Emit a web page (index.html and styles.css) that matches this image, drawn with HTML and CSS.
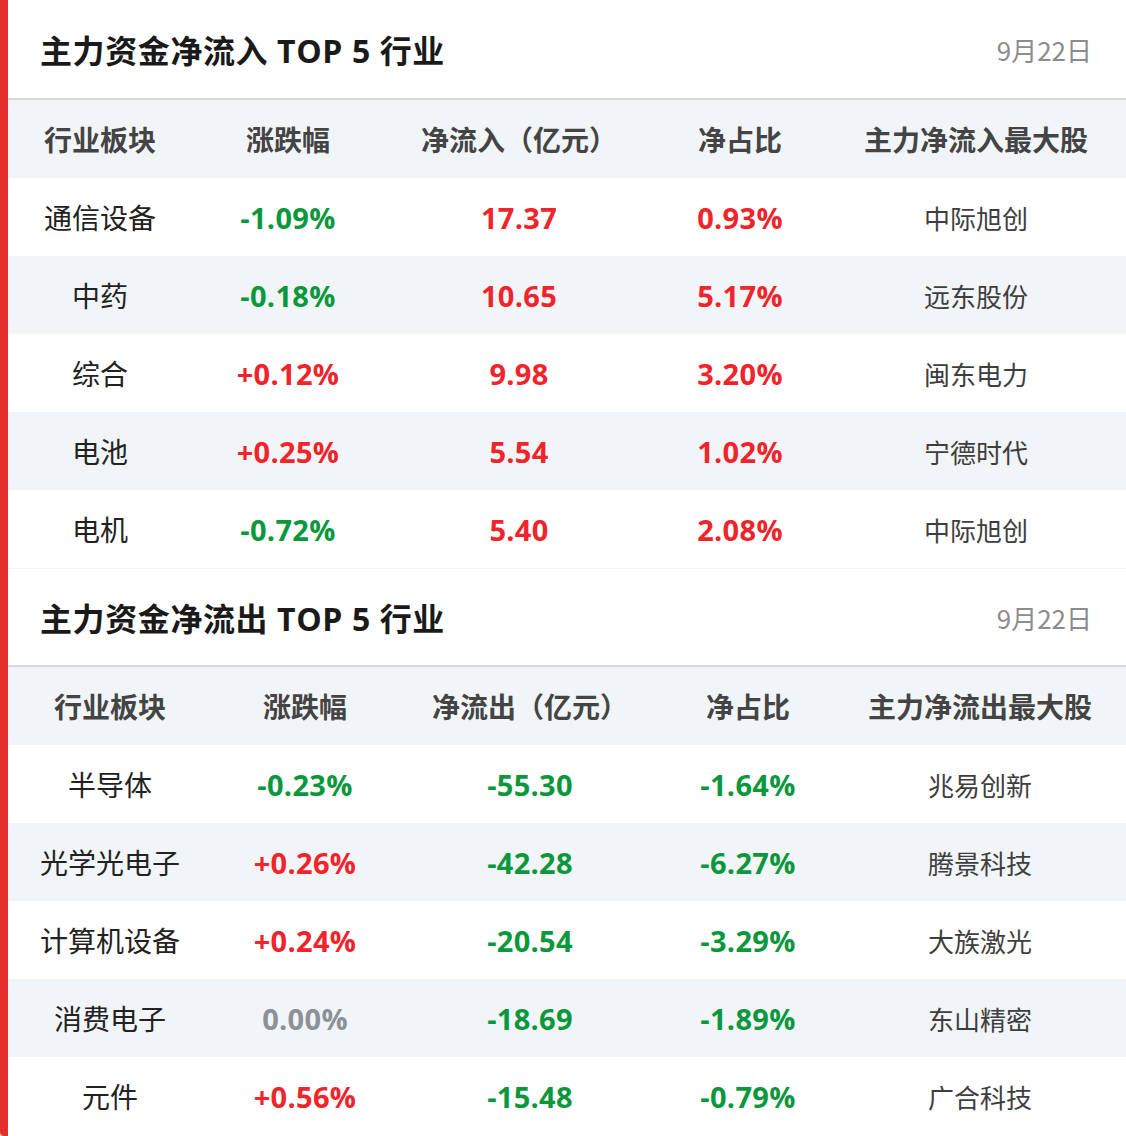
FILE: index.html
```html
<!DOCTYPE html>
<html lang="zh-CN">
<head>
<meta charset="utf-8">
<title>主力资金净流入/净流出 TOP 5 行业</title>
<link rel="stylesheet" href="styles.css">
</head>
<body>
<div class="page">
  <section class="panel">
    <header class="panel-head">
      <h2 class="panel-title">主力资金净流入 TOP 5 行业</h2>
      <span class="panel-date">9月22日</span>
    </header>
    <div class="grid grid-in">
      <div class="row row-head">
        <div class="cell">行业板块</div><div class="cell">涨跌幅</div><div class="cell">净流入（亿元）</div><div class="cell">净占比</div><div class="cell">主力净流入最大股</div>
      </div>
      <div class="row">
        <div class="cell name">通信设备</div><div class="cell num down">-1.09%</div><div class="cell num up">17.37</div><div class="cell num up">0.93%</div><div class="cell stock">中际旭创</div>
      </div>
      <div class="row alt">
        <div class="cell name">中药</div><div class="cell num down">-0.18%</div><div class="cell num up">10.65</div><div class="cell num up">5.17%</div><div class="cell stock">远东股份</div>
      </div>
      <div class="row">
        <div class="cell name">综合</div><div class="cell num up">+0.12%</div><div class="cell num up">9.98</div><div class="cell num up">3.20%</div><div class="cell stock">闽东电力</div>
      </div>
      <div class="row alt">
        <div class="cell name">电池</div><div class="cell num up">+0.25%</div><div class="cell num up">5.54</div><div class="cell num up">1.02%</div><div class="cell stock">宁德时代</div>
      </div>
      <div class="row">
        <div class="cell name">电机</div><div class="cell num down">-0.72%</div><div class="cell num up">5.40</div><div class="cell num up">2.08%</div><div class="cell stock">中际旭创</div>
      </div>
    </div>
  </section>
  <section class="panel panel-second">
    <header class="panel-head">
      <h2 class="panel-title">主力资金净流出 TOP 5 行业</h2>
      <span class="panel-date">9月22日</span>
    </header>
    <div class="grid grid-out">
      <div class="row row-head">
        <div class="cell">行业板块</div><div class="cell">涨跌幅</div><div class="cell">净流出（亿元）</div><div class="cell">净占比</div><div class="cell">主力净流出最大股</div>
      </div>
      <div class="row">
        <div class="cell name">半导体</div><div class="cell num down">-0.23%</div><div class="cell num down">-55.30</div><div class="cell num down">-1.64%</div><div class="cell stock">兆易创新</div>
      </div>
      <div class="row alt">
        <div class="cell name">光学光电子</div><div class="cell num up">+0.26%</div><div class="cell num down">-42.28</div><div class="cell num down">-6.27%</div><div class="cell stock">腾景科技</div>
      </div>
      <div class="row">
        <div class="cell name">计算机设备</div><div class="cell num up">+0.24%</div><div class="cell num down">-20.54</div><div class="cell num down">-3.29%</div><div class="cell stock">大族激光</div>
      </div>
      <div class="row alt">
        <div class="cell name">消费电子</div><div class="cell num flat">0.00%</div><div class="cell num down">-18.69</div><div class="cell num down">-1.89%</div><div class="cell stock">东山精密</div>
      </div>
      <div class="row">
        <div class="cell name">元件</div><div class="cell num up">+0.56%</div><div class="cell num down">-15.48</div><div class="cell num down">-0.79%</div><div class="cell stock">广合科技</div>
      </div>
    </div>
  </section>
</div>
</body>
</html>
```

FILE: styles.css
```css
* { box-sizing: border-box; }

html, body {
  margin: 0;
  padding: 0;
  background: #ffffff;
}

body {
  font-family: "Open Sans", "Noto Sans CJK SC", sans-serif;
  color: #222222;
}

.page {
  width: 1126px;
  min-height: 1136px;
  border-left: 8px solid #e3302a;
  border-bottom-left-radius: 4px;
}

.panel-head {
  height: 100px;
  display: flex;
  align-items: center;
  justify-content: space-between;
  padding: 0 34px 0 32px;
  border-bottom: 2px solid #d4d8dd;
}

.panel-second .panel-head {
  height: 99px;
  border-top: 1px solid #f4f4f4;
}

.panel-title {
  margin: 0;
  font-size: 32px;
  font-weight: 700;
  color: #1a1a1a;
  letter-spacing: 0.6px;
}

.panel-date {
  font-size: 26px;
  color: #8c8c8c;
  font-family: "Noto Sans CJK SC", sans-serif;
  font-weight: 400;
}

.grid-in .row {
  grid-template-columns: 184px 192px 270px 172px 300px;
}

.grid-out .row {
  grid-template-columns: 204px 186px 264px 172px 292px;
}

.row {
  display: grid;
  height: 78px;
  align-items: center;
  background: #ffffff;
}

.row.alt,
.row-head {
  background: #f1f5f8;
}

.cell {
  text-align: center;
  font-size: 28px;
  white-space: nowrap;
}

.row-head .cell {
  font-weight: 700;
  color: #444444;
  font-family: "Noto Sans CJK SC", sans-serif;
}

.name {
  color: #222222;
  font-family: "Noto Sans CJK SC", sans-serif;
}

.num {
  font-weight: 700;
  font-size: 29px;
  letter-spacing: 0.3px;
}

.stock {
  font-size: 26px;
  color: #3e3e3e;
  font-family: "Noto Sans CJK SC", sans-serif;
}

.up { color: #f0242b; }
.down { color: #0b983c; }
.flat { color: #8b9099; }
```
